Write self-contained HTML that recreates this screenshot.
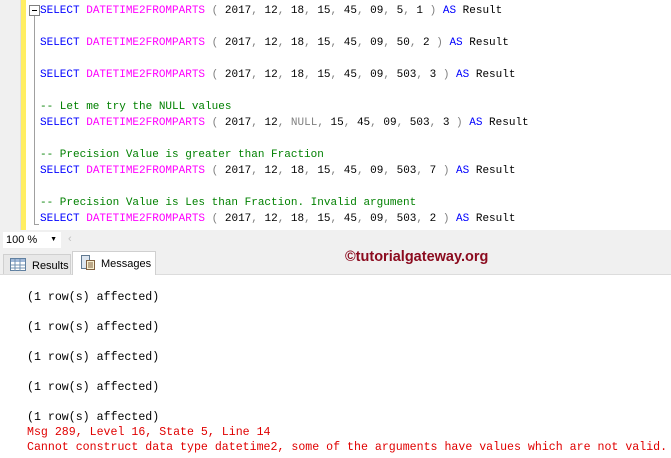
<!DOCTYPE html>
<html><head><style>
body{margin:0;width:671px;height:458px;overflow:hidden;background:#fff;position:relative;font-family:"Liberation Mono",monospace}
.ed{position:absolute;left:0;top:0;width:671px;height:230px;background:#fff}
.gut{position:absolute;left:0;top:0;width:20px;height:230px;background:#f0f0f0;border-right:1px solid #e0e0e0}
.yb{position:absolute;left:21px;top:0;width:5px;height:230px;background:#ffee62}
.ol{position:absolute;left:34px;top:15px;width:1px;height:210px;background:#a0a0a0}
.olt{position:absolute;left:34px;top:224px;width:5px;height:1px;background:#a0a0a0}
.box{position:absolute;left:29px;top:5px;width:9px;height:9px;border:1px solid #808080;background:#fff}
.box:after{content:"";position:absolute;left:2px;top:4px;width:5px;height:1px;background:#000}
.code{position:absolute;left:40px;top:3px;font-size:11px;line-height:16px;white-space:pre;color:#000}
.k{color:#0000ff}.f{color:#ff00ff}.g{color:#808080}.c{color:#008000}
.tb{position:absolute;left:0;top:230px;width:671px;height:44px;background:#f0f0f0;border-bottom:1px solid #dcdcdc}
.zm{position:absolute;left:3px;top:232px;width:58px;height:16px;background:#fff;font:11px "Liberation Sans",sans-serif;line-height:16px;padding-left:3px;box-sizing:border-box}
.zm span{position:absolute;right:4px;top:0;font-size:7px}
.tab{position:absolute;font:11px "Liberation Sans",sans-serif;line-height:20px}
.msg{position:absolute;left:27px;top:290px;font-size:11.6px;line-height:15px;white-space:pre;color:#000}
.r{color:#e00000}
.wm{position:absolute;left:345px;top:249px;font:bold 14.5px "Liberation Sans",sans-serif;color:#8b0a1e}
</style></head><body>
<div class="ed"><div class="gut"></div><div class="yb"></div><div class="ol"></div><div class="olt"></div><div class="box"></div>
<div class="code"><span class="k">SELECT</span> <span class="f">DATETIME2FROMPARTS</span> <span class="g">(</span> 2017<span class="g">,</span> 12<span class="g">,</span> 18<span class="g">,</span> 15<span class="g">,</span> 45<span class="g">,</span> 09<span class="g">,</span> 5<span class="g">,</span> 1 <span class="g">)</span> <span class="k">AS</span> Result

<span class="k">SELECT</span> <span class="f">DATETIME2FROMPARTS</span> <span class="g">(</span> 2017<span class="g">,</span> 12<span class="g">,</span> 18<span class="g">,</span> 15<span class="g">,</span> 45<span class="g">,</span> 09<span class="g">,</span> 50<span class="g">,</span> 2 <span class="g">)</span> <span class="k">AS</span> Result

<span class="k">SELECT</span> <span class="f">DATETIME2FROMPARTS</span> <span class="g">(</span> 2017<span class="g">,</span> 12<span class="g">,</span> 18<span class="g">,</span> 15<span class="g">,</span> 45<span class="g">,</span> 09<span class="g">,</span> 503<span class="g">,</span> 3 <span class="g">)</span> <span class="k">AS</span> Result

<span class="c">-- Let me try the NULL values</span>
<span class="k">SELECT</span> <span class="f">DATETIME2FROMPARTS</span> <span class="g">(</span> 2017<span class="g">,</span> 12<span class="g">,</span> <span class="g">NULL,</span> 15<span class="g">,</span> 45<span class="g">,</span> 09<span class="g">,</span> 503<span class="g">,</span> 3 <span class="g">)</span> <span class="k">AS</span> Result

<span class="c">-- Precision Value is greater than Fraction</span>
<span class="k">SELECT</span> <span class="f">DATETIME2FROMPARTS</span> <span class="g">(</span> 2017<span class="g">,</span> 12<span class="g">,</span> 18<span class="g">,</span> 15<span class="g">,</span> 45<span class="g">,</span> 09<span class="g">,</span> 503<span class="g">,</span> 7 <span class="g">)</span> <span class="k">AS</span> Result

<span class="c">-- Precision Value is Les than Fraction. Invalid argument</span>
<span class="k">SELECT</span> <span class="f">DATETIME2FROMPARTS</span> <span class="g">(</span> 2017<span class="g">,</span> 12<span class="g">,</span> 18<span class="g">,</span> 15<span class="g">,</span> 45<span class="g">,</span> 09<span class="g">,</span> 503<span class="g">,</span> 2 <span class="g">)</span> <span class="k">AS</span> Result</div></div>
<div class="tb"></div>
<div class="zm">100 %<span>▼</span></div>
<div style="position:absolute;left:68px;top:233px;color:#c0c0c0;font:11px sans-serif">‹</div>
<div style="position:absolute;left:3px;top:254px;width:68px;height:20px;background:#e8e8e8;border:1px solid #d0d0d0;border-bottom:none;box-sizing:border-box"></div>
<div style="position:absolute;left:72px;top:251px;width:84px;height:24px;background:#fff;border:1px solid #d0d0d0;border-bottom:none;box-sizing:border-box"></div>
<svg style="position:absolute;left:10px;top:258px" width="16" height="13"><rect x="0.5" y="0.5" width="15" height="12" fill="#fff" stroke="#6080a0"/><rect x="1" y="1" width="14" height="3" fill="#a0b8d8"/><path d="M5 1v12M10 1v12M1 7h14M1 10h14" stroke="#7090b0"/></svg>
<div class="tab" style="left:32px;top:256px">Results</div>
<svg style="position:absolute;left:80px;top:254px" width="16" height="17"><rect x="1.5" y="1.5" width="8" height="13" fill="#dde6f0" stroke="#607890"/><rect x="6.5" y="6.5" width="8" height="9" fill="#f8f0d0" stroke="#806040"/><path d="M8 9h5M8 11h5M8 13h5" stroke="#806040"/></svg>
<div class="tab" style="left:101px;top:254px">Messages</div>
<div class="wm">©tutorialgateway.org</div>
<div class="msg">(1 row(s) affected)

(1 row(s) affected)

(1 row(s) affected)

(1 row(s) affected)

(1 row(s) affected)
<span class="r">Msg 289, Level 16, State 5, Line 14
Cannot construct data type datetime2, some of the arguments have values which are not valid.</span></div>
</body></html>
